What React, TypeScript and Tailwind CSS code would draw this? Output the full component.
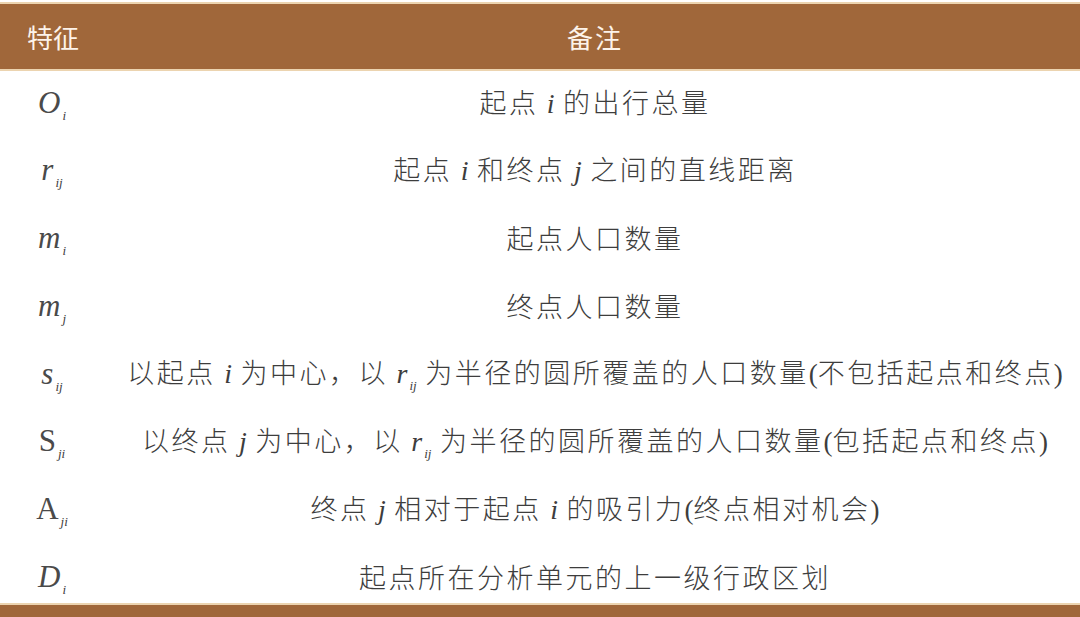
import React from "react";

/* ===== Math bits (serif italic, like the typeset original) ===== */
function M({ base, sub, upright = false, big = false }: { base: string; sub?: string; upright?: boolean; big?: boolean }) {
  return (
    <span className="font-['Liberation_Serif',serif] whitespace-nowrap tracking-normal">
      <span className={`${upright ? "not-italic" : "italic"} ${big ? "text-[31px] text-[#4a4a4a]" : "text-[28px]"}`}>{base}</span>
      {sub && <span className="relative top-[7px] ml-[2px] text-[13px] italic">{sub}</span>}
    </span>
  );
}

const Paren = ({ c }: { c: string }) => <span className="font-['Liberation_Serif',serif] tracking-normal">{c}</span>;

type Row = { sym: React.ReactNode; note: React.ReactNode };

const rows: Row[] = [
  { sym: <M base="O" sub="i" big />, note: <>起点 <M base="i" /> 的出行总量</> },
  { sym: <M base="r" sub="ij" big />, note: <>起点 <M base="i" /> 和终点 <M base="j" /> 之间的直线距离</> },
  { sym: <M base="m" sub="i" big />, note: <>起点人口数量</> },
  { sym: <M base="m" sub="j" big />, note: <>终点人口数量</> },
  {
    sym: <M base="s" sub="ij" big />,
    note: (
      <>
        以起点 <M base="i" /> 为中心，以 <M base="r" sub="ij" /> 为半径的圆所覆盖的人口数量<Paren c="(" />不包括起点和终点<Paren c=")" />
      </>
    ),
  },
  {
    sym: <M base="S" sub="ji" upright big />,
    note: (
      <>
        以终点 <M base="j" /> 为中心，以 <M base="r" sub="ij" /> 为半径的圆所覆盖的人口数量<Paren c="(" />包括起点和终点<Paren c=")" />
      </>
    ),
  },
  {
    sym: <M base="A" sub="ji" upright big />,
    note: (
      <>
        终点 <M base="j" /> 相对于起点 <M base="i" /> 的吸引力<Paren c="(" />终点相对机会<Paren c=")" />
      </>
    ),
  },
  { sym: <M base="D" sub="i" big />, note: <>起点所在分析单元的上一级行政区划</> },
];

export default function App() {
  return (
    <div className="flex h-[617px] w-[1080px] flex-col overflow-hidden bg-white pt-[2px] font-['Noto_Sans_CJK_SC','Noto_Sans',sans-serif]">
      {/* Header */}
      <div className="flex h-[69px] items-center border-y-2 border-[#ecd4b0] bg-[#a0673a] text-[26px] text-[#fdf3ea]">
        <div className="w-[110px] pl-[27px]">特征</div>
        <div className="flex-1 text-center tracking-[2px]">备注</div>
      </div>

      {/* Body */}
      <div className="flex flex-1 flex-col justify-between pt-[7px] pb-[1px]">
        {rows.map((r, i) => (
          <div key={i} className="flex h-[50px] items-center text-[#3d3d3d]">
            <div className="flex w-[110px] justify-center pr-[6px]">{r.sym}</div>
            <div className="flex-1 whitespace-nowrap text-center text-[27px] font-light tracking-[2.5px]">{r.note}</div>
          </div>
        ))}
      </div>

      {/* Bottom rule */}
      <div className="h-[14px] border-t-2 border-[#ecd4b0] bg-[#a0673a]" />
    </div>
  );
}
